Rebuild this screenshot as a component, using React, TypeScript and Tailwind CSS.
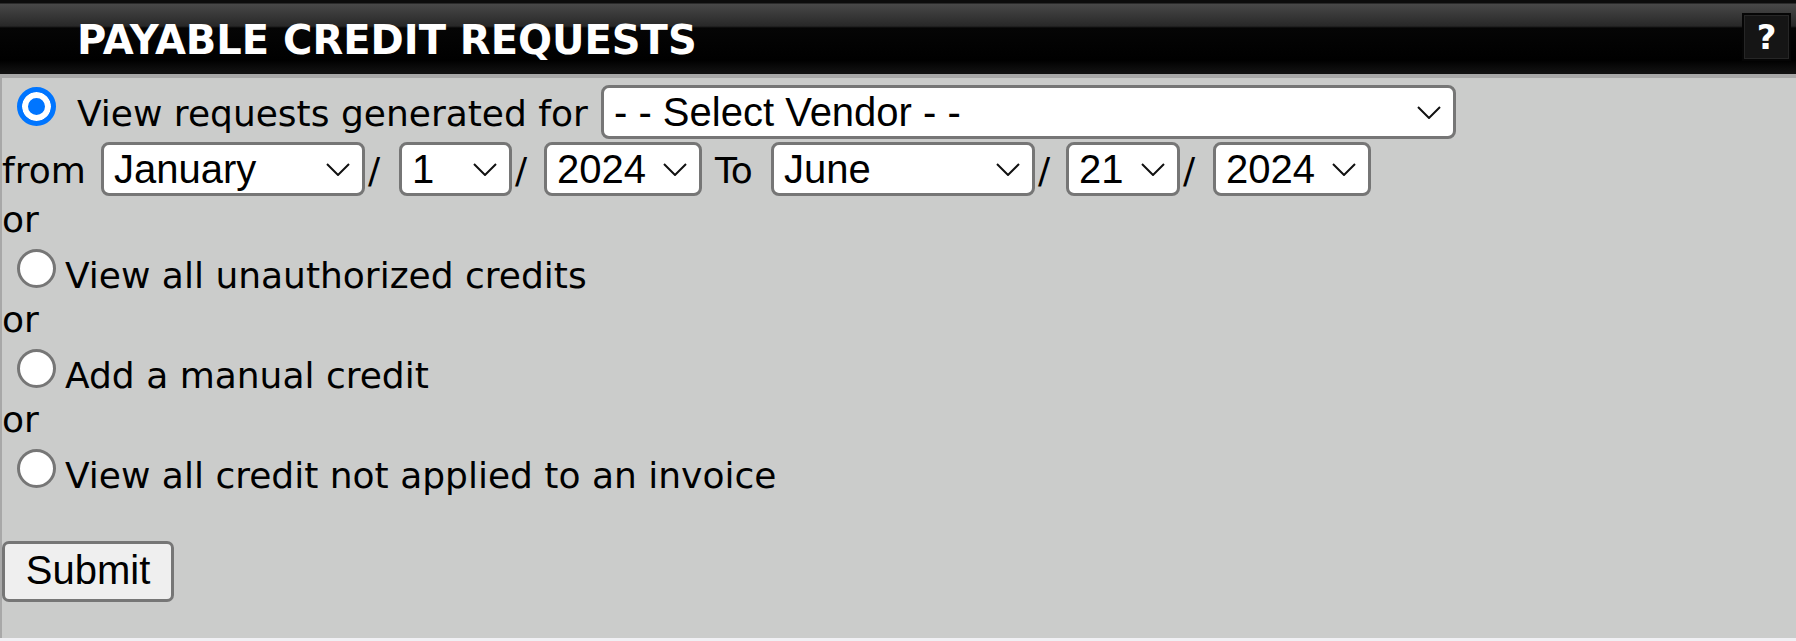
import React from "react";

interface SelectProps {
  value: string;
  width: string;
}

const Select = ({ value, width }: SelectProps) => (
  <div
    className={`${width} h-[54px] shrink-0 flex items-center justify-between rounded-[8px] border-[3px] border-[#767676] bg-white pl-[10px] pr-[12px] font-['Liberation_Sans',Arial,sans-serif] text-[40px] text-black`}
  >
    <span className="leading-[46px] whitespace-nowrap">{value}</span>
    <svg width="24" height="13" viewBox="0 0 24 13" className="shrink-0">
      <path d="M1 1L12 12L23 1" fill="none" stroke="#111" strokeWidth="2" />
    </svg>
  </div>
);

// single element each, so the baseline sits on the bottom edge like a real radio
const Radio = ({ checked }: { checked?: boolean }) =>
  checked ? (
    <span className="ml-[15px] mr-[9px] mt-[9px] w-[39px] h-[39px] shrink-0 rounded-full border-[5px] border-[#0075ff] bg-[#0075ff] shadow-[inset_0_0_0_6px_#ffffff]" />
  ) : (
    <span className="ml-[15px] mr-[9px] mt-[9px] w-[39px] h-[39px] shrink-0 rounded-full border-[3px] border-[#767676] bg-white" />
  );

const Or = () => <div className="h-[44px] pt-[2px] leading-[44px]">or</div>;

const Slash = ({ width }: { width: string }) => (
  <span className={`${width} shrink-0 pl-[3px] leading-[44px]`}>/</span>
);

export default function App() {
  return (
    <div className="min-h-screen bg-[#f0f0f4] font-['DejaVu_Sans',Verdana,sans-serif] text-[36px] text-black">
      {/* HEADER */}
      <div className="h-[74px] flex items-center justify-between pl-[77px] pr-[5px] bg-[linear-gradient(to_bottom,#0c0c0c_0px,#0c0c0c_3px,#484848_4px,#282828_26px,#050505_28px,#000_60px,#111_72px,#111_74px)]">
        <h1 className="pt-[6px] text-[40px] font-bold text-white leading-[44px]">
          PAYABLE CREDIT REQUESTS
        </h1>
        <div className="w-[49px] h-[48px] flex items-center justify-center border-2 border-[#050505] bg-[#151515] shadow-[inset_0_0_0_1px_#262626] text-[34px] font-bold text-white">
          ?
        </div>
      </div>

      {/* BODY */}
      <div className="h-[564px] border-l-[2px] border-t-[4px] border-[#a8a8a8] bg-[#cbcccb]">
        <div className="h-[64px] flex items-baseline">
          <Radio checked />
          <span className="ml-[12px] w-[524px] shrink-0 leading-[44px] whitespace-nowrap">
            View requests generated for
          </span>
          <Select value="- - Select Vendor - -" width="w-[855px]" />
        </div>

        <div className="h-[54px] flex items-baseline">
          <span className="w-[99px] shrink-0 leading-[44px]">from</span>
          <Select value="January" width="w-[264px]" />
          <Slash width="w-[34px]" />
          <Select value="1" width="w-[113px]" />
          <Slash width="w-[32px]" />
          <Select value="2024" width="w-[158px]" />
          <span className="w-[69px] shrink-0 pl-[13px] leading-[44px]">To</span>
          <Select value="June" width="w-[264px]" />
          <Slash width="w-[31px]" />
          <Select value="21" width="w-[114px]" />
          <Slash width="w-[33px]" />
          <Select value="2024" width="w-[158px]" />
        </div>

        <Or />
        <div className="h-[56px] flex items-baseline">
          <Radio />
          <span className="leading-[44px] whitespace-nowrap">View all unauthorized credits</span>
        </div>
        <Or />
        <div className="h-[56px] flex items-baseline">
          <Radio />
          <span className="leading-[44px] whitespace-nowrap">Add a manual credit</span>
        </div>
        <Or />
        <div className="h-[56px] flex items-baseline">
          <Radio />
          <span className="leading-[44px] whitespace-nowrap">View all credit not applied to an invoice</span>
        </div>

        <div className="mt-[45px]">
          <button className="w-[172px] h-[61px] rounded-[7px] border-[3px] border-[#767676] bg-[#efefef] pb-[4px] font-['Liberation_Sans',Arial,sans-serif] text-[40px] leading-[46px] text-black">
            Submit
          </button>
        </div>
      </div>
    </div>
  );
}
